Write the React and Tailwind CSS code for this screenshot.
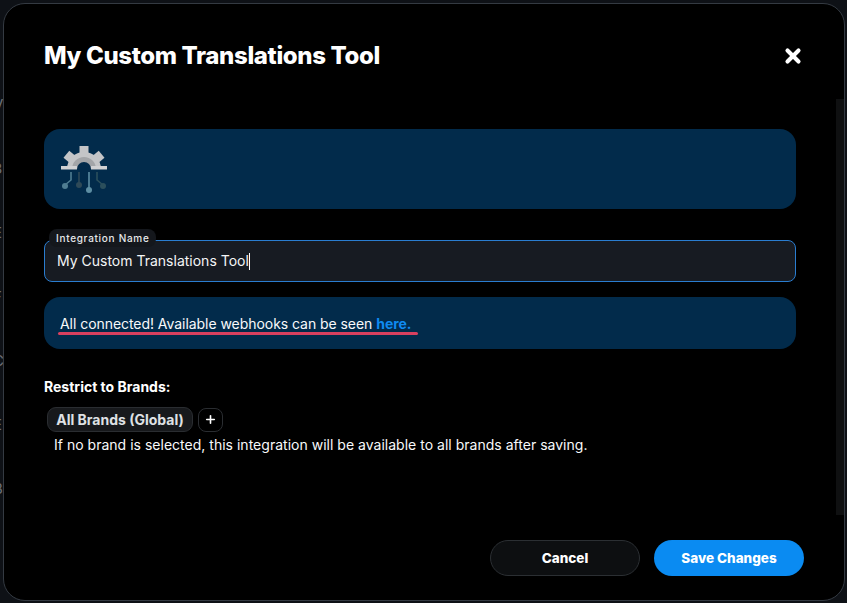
import { Plus, X } from "lucide-react";

const GearIcon = () => (
    <svg width="46" height="48" viewBox="0 0 46 48" fill="none">
        <path d="M6 24a17 17 0 0 1 34 0z" fill="#c4c5c7" />
        <rect x="18.500" y="1" width="9" height="9" fill="#c4c5c7" />
        <rect x="18.500" y="1" width="9" height="9" fill="#c4c5c7" transform="rotate(-50 23 24)" />
        <rect x="18.500" y="1" width="9" height="9" fill="#c4c5c7" transform="rotate(50 23 24)" />
        <path d="M11 24a12 12 0 0 1 24 0z" fill="#a3a5a8" />
        <path d="M16 24a7 7 0 0 1 14 0z" fill="#022b4b" />
        <rect x="0" y="21" width="16" height="3.500" fill="#d0d1d3" />
        <rect x="30" y="21" width="16" height="3.500" fill="#d0d1d3" />
        <path d="M10 27v8l-6 5" stroke="#4f7d92" strokeWidth="1.600" />
        <circle cx="4" cy="41" r="3" fill="#4f7d92" />
        <path d="M18 27v12" stroke="#2f4a58" strokeWidth="1.600" />
        <circle cx="18" cy="40" r="3" fill="#2f4a58" />
        <path d="M28 27v17" stroke="#5d8ea3" strokeWidth="1.600" />
        <circle cx="28" cy="45" r="3" fill="#5d8ea3" />
        <path d="M36 27v8l6 5" stroke="#2b4f5c" strokeWidth="1.600" />
        <circle cx="42" cy="41" r="3" fill="#2b4f5c" />
    </svg>
);

const App = () => {
    return (
        <div className="relative w-[847px] h-[603px] overflow-hidden bg-[#0e1116] font-['Inter',sans-serif] text-white">
            <div className="flex flex-col gap-[42px] pt-[94px] ml-[-7px] text-[15px] leading-[22px] text-[#6b6f78]">
                <span>V</span>
                <span>8</span>
                <span>E</span>
                <span>F</span>
                <span>C</span>
                <span>E</span>
                <span>B</span>
                <span>I</span>
            </div>

            <div className="absolute left-[3px] top-[3px] w-[842px] h-[598px] flex flex-col rounded-[22px] border border-[#343a42] bg-black pl-[40px] pr-[40px]">
                <div className="absolute right-0 top-[95px] w-[8px] h-[416px] bg-[#0f1011]" />

                <div className="flex items-center justify-between h-[30px] mt-[37px]">
                    <h2 className="font-['Inter',sans-serif] text-[24px] font-extrabold tracking-[-0.36px] leading-none">
                        My Custom Translations Tool
                    </h2>
                    <button className="flex items-center justify-center w-[24px] h-[24px] mr-[-1px]">
                        <X size={22} strokeWidth={4.5} color="#ffffff" />
                    </button>
                </div>

                <div className="flex items-center h-[80px] w-[752px] mt-[58px] pl-[17px] rounded-[16px] bg-[#022b4b]">
                    <GearIcon />
                </div>

                <div className="relative mt-[31px] w-[752px] h-[42px] flex items-center px-[12px] rounded-[8px] border border-[#2a7dd0] bg-[#171b22]">
                    <span className="absolute left-[4px] top-[-12px] h-[18px] flex items-center px-[7px] rounded-[8px] bg-[#14171c] text-[10px] font-medium tracking-[0.7px] text-[#e6e8ea]">
                        Integration Name
                    </span>
                    <span className="text-[14px] leading-none text-[#f4f5f6]">My Custom Translations Tool</span>
                    <span className="w-px h-[17px] bg-white" />
                </div>

                <div className="relative mt-[15px] w-[752px] h-[52px] flex items-center pl-[16px] rounded-[16px] bg-[#022b4b] text-[14px] text-[#f8f9fa]">
                    <span className="tracking-[-0.05px]">
                        All connected! Available webhooks can be seen{" "}
                        <a className="font-bold text-[#0f8af0]">here.</a>
                    </span>
                    <div className="absolute left-[14px] top-[35px] w-[360px] h-[3px] rounded-full bg-[#d8405f]" />
                </div>

                <div className="mt-[30px] text-[14px] font-bold leading-[16px]">Restrict to Brands:</div>

                <div className="flex items-center gap-[5px] mt-[12px] ml-[3px]">
                    <span className="flex items-center h-[25px] w-[146px] justify-center rounded-[9px] border border-[#2a2d31] bg-[#17191c] text-[14px] font-bold text-[#dfe1e4]">
                        All Brands (Global)
                    </span>
                    <button className="flex items-center justify-center w-[25px] h-[24px] rounded-[8px] border border-[#2a2d31]">
                        <Plus size={13} strokeWidth={3} color="#ffffff" />
                    </button>
                </div>

                <p className="mt-[3px] ml-[10px] text-[14px] leading-[20px] tracking-[0.015px] text-[#f8f9fa]">
                    If no brand is selected, this integration will be available to all brands after saving.
                </p>

                <div className="flex justify-end gap-[14px] mt-[85px]">
                    <button className="w-[150px] h-[36px] rounded-full border border-[#2b2f33] bg-[#0d0f11] text-[13.500px] font-extrabold text-white">
                        Cancel
                    </button>
                    <button className="w-[150px] h-[36px] rounded-full bg-[#0a8bf2] text-[13.500px] font-extrabold text-white">
                        Save Changes
                    </button>
                </div>
            </div>
        </div>
    );
};

export default App;
